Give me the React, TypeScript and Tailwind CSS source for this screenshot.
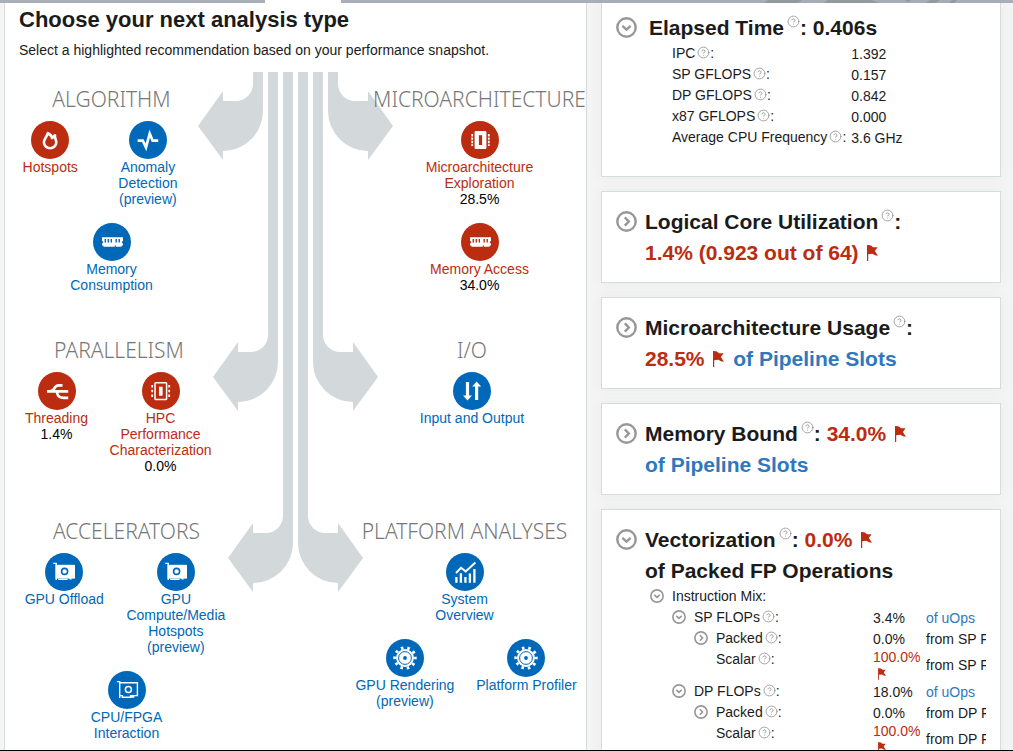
import React from "react";
import { CircleHelp } from "lucide-react";

type Tone = "red" | "blue";
type IconName =
  | "flame"
  | "pulse"
  | "memory"
  | "chip"
  | "chipOutline"
  | "threads"
  | "io"
  | "gpu"
  | "gpuOutline"
  | "chart"
  | "gear";

const CORE: Record<Tone, string> = { red: "#bb2c10", blue: "#0068b8" };

function Glyph({ name, core }: { name: IconName; core: string }) {
  switch (name) {
    case "flame":
      return (
        <path
          d="M16.8 12.2C16 15.8 12.9 17.6 12.9 21.6a6.2 5.6 0 0 0 12.4 0C25.3 18.8 23.6 17.6 24 14.2L21.2 17.2C20.6 14.6 19.2 13.2 16.8 12.2Z"
          fill="none"
          stroke="#fff"
          strokeWidth="2.6"
          strokeLinejoin="round"
        />
      );
    case "pulse":
      return (
        <path
          d="M8.6 19.6H13.8L17 26.4L20.7 12.6L23.6 19.6H29.2"
          fill="none"
          stroke="#fff"
          strokeWidth="2.6"
        />
      );
    case "memory":
      return (
        <>
          <path d="M9 14.3H30V18.2H29V20.2H30V22.5H28.6V23.8H22.8V22.5H21.8V23.8H10.4V22.5H9V20.2H10V18.2H9Z" fill="#fff" />
          <path d="M12.3 16V19.4M15.3 16V19.4M18.3 16V19.4M23.2 16V19.4M26.2 16V19.4" stroke={core} strokeWidth="1.4" />
        </>
      );
    case "chip":
      return (
        <>
          <rect x="13.6" y="10" width="11.8" height="18" rx="1.2" fill="#fff" />
          <rect x="17.9" y="14.2" width="3.2" height="9.8" fill={core} />
          <path d="M11.2 13V25M27.8 13V25" stroke="#fff" strokeWidth="1.8" strokeDasharray="2.4 1" />
        </>
      );
    case "chipOutline":
      return (
        <>
          <rect x="13" y="10.7" width="11.6" height="16.8" rx="0.8" fill="none" stroke="#fff" strokeWidth="1.5" />
          <rect x="17" y="14.7" width="3.6" height="9" fill="#fff" />
          <path d="M10.2 13V25M27.2 13V25" stroke="#fff" strokeWidth="1.8" strokeDasharray="2.6 2.1" />
        </>
      );
    case "threads":
      return (
        <path
          d="M9 19.4H30.2M24.5 13.3H20.5C15.5 13.3 17.5 19.4 12 19.4M30.2 25.8H25.5C20.5 25.8 19.6 23.6 18.8 19.4"
          fill="none"
          stroke="#fff"
          strokeWidth="2.7"
        />
      );
    case "io":
      return (
        <>
          <path d="M14.5 10V26M23.6 12V28" stroke="#fff" strokeWidth="3.2" />
          <path d="M10 23.4L14.5 28.4L19 23.4ZM19.2 14.6L23.6 9.6L28.2 14.6Z" fill="#fff" />
        </>
      );
    case "gpu":
      return (
        <>
          <path d="M8.3 10.4H11.2V27M13.2 26.4H22.6M24.4 25.8H26.6" fill="none" stroke="#fff" strokeWidth="1.4" />
          <rect x="10.6" y="11.8" width="19.4" height="13.8" fill="#fff" />
          <circle cx="19.6" cy="18.4" r="3" fill="#fff" stroke={core} strokeWidth="1.6" />
        </>
      );
    case "gpuOutline":
      return (
        <>
          <path
            d="M9 10.6H11.7V27M11.7 11.7H29.4V24.6H25.6V26H23.6V24.6M11.7 24.6H14.4V26.2H22.6V24.6H25"
            fill="none"
            stroke="#fff"
            strokeWidth="1.4"
          />
          <circle cx="20.4" cy="18.4" r="3" fill="none" stroke="#fff" strokeWidth="1.5" />
        </>
      );
    case "chart":
      return (
        <>
          <path
            d="M10.4 24V29.8M14.9 20.3V29.8M19.4 24V29.8M23.9 20.6V29.8M28.4 16V29.8"
            stroke="#fff"
            strokeWidth="2.3"
          />
          <path d="M10 20L15 14.8L19.7 18.4L29.4 9.4" fill="none" stroke="#fff" strokeWidth="2" />
        </>
      );
    case "gear":
      return (
        <>
          <circle cx="19" cy="19" r="10.2" fill="none" stroke="#fff" strokeWidth="3" strokeDasharray="2.6 3.81" transform="rotate(-7 19 19)" />
          <circle cx="19" cy="19" r="8.9" fill="#fff" />
          <circle cx="19" cy="19" r="6.4" fill="none" stroke={core} strokeWidth="1" />
          <circle cx="19" cy="19" r="1.9" fill={core} />
        </>
      );
  }
}

type Analysis = { label: string; tone: Tone; icon: IconName; value?: string };

function AnalysisLink({ item }: { item: Analysis }) {
  return (
    <a
      href="#"
      className={`flex max-w-[105px] flex-col items-center text-center text-sm leading-4 ${
        item.tone === "red" ? "text-[#bb2c10]" : "text-[#0068b8]"
      }`}
    >
      <svg viewBox="0 0 38 38" className="size-[38px]" aria-hidden="true">
        <circle cx="19" cy="19" r="19" fill={CORE[item.tone]} />
        <Glyph name={item.icon} core={CORE[item.tone]} />
      </svg>
      <span>{item.label}</span>
      {item.value && <span className="text-black">{item.value}</span>}
    </a>
  );
}

function Category({
  title,
  rows,
  around = false,
}: {
  title: string;
  rows: Analysis[][];
  around?: boolean;
}) {
  return (
    <section className="flex min-w-0 flex-col items-center">
      <h2 className="mb-2 font-['Noto_Sans',sans-serif] text-[21px] leading-7 font-light whitespace-nowrap text-[#777]">
        {title}
      </h2>
      <div className="flex w-full flex-col gap-4">
        {rows.map((row, i) => (
          <div key={i} className={`flex ${around ? "justify-around" : "justify-evenly"}`}>
            {row.map((item) => (
              <AnalysisLink key={item.label} item={item} />
            ))}
          </div>
        ))}
      </div>
    </section>
  );
}

// One left-pointing arrow; each step moves it inward by a stripe, drop lengthens its stem.
function arrowPath(step: number, drop: number) {
  const x = step * 15;
  return `M${55 + x} 0V${12 + drop}A17 17 0 0 1 ${38 + x} ${29 + drop}H${25 + x}V${19 + drop}L${x} ${
    54 + drop
  }L${25 + x} ${88 + drop}V${79 + drop}A40 40 0 0 0 ${65 + x} ${39 + drop}V0Z`;
}

function FlowArrows() {
  const half = (
    <>
      <path d={arrowPath(0, 0)} />
      <path d={arrowPath(1, 251)} />
      <path d={arrowPath(2, 432)} />
    </>
  );
  return (
    <svg viewBox="0 0 195 520" className="col-start-1 row-start-1 h-[520px] w-[195px] justify-self-center" fill="#d3d8db" aria-hidden="true">
      {half}
      <g transform="translate(195 0) scale(-1 1)">{half}</g>
    </svg>
  );
}

function Toggle({ open, small = false, label }: { open: boolean; small?: boolean; label: string }) {
  return (
    <button type="button" aria-label={label} aria-expanded={open} className={`shrink-0 ${small ? "size-3.5" : "size-[21px]"}`}>
      <svg viewBox="0 0 21 21" className="size-full" fill="none" stroke="#979797" strokeWidth="2.4" aria-hidden="true">
        <circle cx="10.5" cy="10.5" r="9.2" />
        <path d={open ? "M6.4 8.8L10.5 12.6L14.6 8.8" : "M8.8 6.4L12.8 10.5L8.8 14.6"} />
      </svg>
    </button>
  );
}

function Help({ big = false }: { big?: boolean }) {
  return (
    <CircleHelp
      className={`inline shrink-0 align-baseline text-[#949494] ${big ? "mb-[7px] ml-[3px] size-[13px]" : "mb-0.5 ml-0.5 size-[13px]"}`}
      strokeWidth={1.6}
      aria-label="Help"
    />
  );
}

function Flag({ small = false }: { small?: boolean }) {
  return (
    <svg viewBox="0 0 11 16" className={`inline ${small ? "h-3 w-2" : "ml-[3px] h-4 w-[11px] align-[-1px]"}`} fill="#bb2c10" role="img" aria-label="Flagged">
      <path d="M0 0H1.2V16H0Z" />
      <path d="M1 0L4 0.6L6 2.2L10.6 2.2L7.8 6L11 10.8L8 10.2L5.4 8.8L1 9.2Z" />
    </svg>
  );
}

const HEAD = "text-[21px] leading-[31px] font-bold text-[#1b1b1b]";

function Card({ open = false, name, children, body, wide = false, first = false }: {
  open?: boolean;
  name: string;
  children: React.ReactNode;
  body?: React.ReactNode;
  wide?: boolean;
  first?: boolean;
}) {
  return (
    <section
      className={`border border-[#d6dbde] bg-white px-3.5 shadow-[0_0_12px_rgba(60,80,80,0.05)] ${
        first ? "border-t-0 pt-[9px] pb-7" : "py-3.5"
      }`}
    >
      <div className={`flex ${wide ? "gap-3" : "gap-2"}`}>
        <span className="flex h-[31px] items-center">
          <Toggle open={open} label={name} />
        </span>
        <h2 className={HEAD}>{children}</h2>
      </div>
      {body}
    </section>
  );
}

type Metric = {
  label: string;
  depth: number;
  toggle?: "open" | "closed";
  help?: boolean;
  value?: string;
  flagged?: boolean;
  note?: string;
  noteLink?: boolean;
};

const INDENT = ["pl-0", "pl-[22px]", "pl-[44px]"];

function MetricTable({ rows, fixed = false }: { rows: Metric[]; fixed?: boolean }) {
  return (
    <div className="overflow-hidden pl-[34px]">
      <table className={`text-sm leading-4 text-[#1b1b1b] ${fixed ? "w-[430px] table-fixed" : ""}`}>
        {fixed && (
          <colgroup>
            <col className="w-[223px]" />
            <col className="w-[53px]" />
            <col />
          </colgroup>
        )}
        <tbody>
          {rows.map((row, i) => (
            <tr key={i} className="align-middle">
              <th scope="row" className="p-0 text-left align-top font-normal">
                <span className={`flex h-[21px] items-center pb-px whitespace-nowrap ${INDENT[row.depth]}`}>
                  <span className="flex w-[22px] shrink-0">
                    {row.toggle && <Toggle small open={row.toggle === "open"} label={row.label} />}
                  </span>
                  {row.label}
                  {row.help && <Help />}:
                </span>
              </th>
              <td className={fixed ? "p-0 pr-1" : "p-0 pt-px pl-[5px]"}>
                {row.flagged ? (
                  <span className="text-[#bb2c10]">
                    {row.value} <span className="block h-4 pl-[5px]"><Flag small /></span>
                  </span>
                ) : (
                  row.value
                )}
              </td>
              {fixed && (
                <td className="p-0 whitespace-nowrap">
                  {row.noteLink ? (
                    <a href="#" className="text-[#2f78bd]">{row.note}</a>
                  ) : (
                    row.note
                  )}
                </td>
              )}
            </tr>
          ))}
        </tbody>
      </table>
    </div>
  );
}

const elapsed: Metric[] = [
  { label: "IPC", depth: 0, help: true, value: "1.392" },
  { label: "SP GFLOPS", depth: 0, help: true, value: "0.157" },
  { label: "DP GFLOPS", depth: 0, help: true, value: "0.842" },
  { label: "x87 GFLOPS", depth: 0, help: true, value: "0.000" },
  { label: "Average CPU Frequency", depth: 0, help: true, value: "3.6 GHz" },
];

const mix: Metric[] = [
  { label: "Instruction Mix", depth: 0, toggle: "open" },
  { label: "SP FLOPs", depth: 1, toggle: "open", help: true, value: "3.4%", note: "of uOps", noteLink: true },
  { label: "Packed", depth: 2, toggle: "closed", help: true, value: "0.0%", note: "from SP FP" },
  { label: "Scalar", depth: 2, help: true, value: "100.0%", flagged: true, note: "from SP FP" },
  { label: "DP FLOPs", depth: 1, toggle: "open", help: true, value: "18.0%", note: "of uOps", noteLink: true },
  { label: "Packed", depth: 2, toggle: "closed", help: true, value: "0.0%", note: "from DP FP" },
  { label: "Scalar", depth: 2, help: true, value: "100.0%", flagged: true, note: "from DP FP" },
];

export default function App() {
  return (
    <div className="flex h-screen flex-col overflow-hidden bg-[#f4f4f4] font-['Liberation_Sans',Arial,sans-serif] text-[#1b1b1b]">
      <div className="flex h-[3px] shrink-0 bg-[#a9afb9]">
        <div className="w-[265px]" />
        <div className="w-[76px] bg-white" />
        <svg viewBox="0 0 672 3" className="h-[3px] w-[672px]" fill="#969c9f" aria-hidden="true">
          <path d="M423 3L427 0H461L457 3ZM483 3L487 0H531L538 3ZM563 0H571L567 2ZM585 3L589 0H599L595 3ZM608 3L611 0H616L613 3Z" />
        </svg>
      </div>

      <main className="flex min-h-0 flex-1 items-stretch pl-1">
        <section className="min-w-0 flex-1 border-x border-[#d6dbde] bg-white">
          <header className="px-3.5 pt-1">
            <h1 className="text-[22px] leading-[26px] font-bold">Choose your next analysis type</h1>
            <p className="mt-[7px] text-sm leading-5">
              Select a highlighted recommendation based on your performance snapshot.
            </p>
          </header>
          <div className="mt-3 grid">
            <FlowArrows />
            <div className="col-start-1 row-start-1 flex flex-col gap-[43px] pt-[13px]">
              <div className="grid grid-cols-[minmax(0,1fr)_155px_minmax(0,1fr)]">
                <Category
                  title="ALGORITHM"
                  rows={[
                    [
                      { label: "Hotspots", tone: "red", icon: "flame" },
                      { label: "Anomaly Detection (preview)", tone: "blue", icon: "pulse" },
                    ],
                    [{ label: "Memory Consumption", tone: "blue", icon: "memory" }],
                  ]}
                />
                <div />
                <Category
                  title="MICROARCHITECTURE"
                  rows={[
                    [{ label: "Microarchitecture Exploration", tone: "red", icon: "chip", value: "28.5%" }],
                    [{ label: "Memory Access", tone: "red", icon: "memory", value: "34.0%" }],
                  ]}
                />
              </div>
              <div className="grid grid-cols-[minmax(0,1fr)_125px_minmax(0,1fr)]">
                <Category
                  title="PARALLELISM"
                  rows={[
                    [
                      { label: "Threading", tone: "red", icon: "threads", value: "1.4%" },
                      { label: "HPC Performance Characterization", tone: "red", icon: "chipOutline", value: "0.0%" },
                    ],
                  ]}
                />
                <div />
                <Category title="I/O" rows={[[{ label: "Input and Output", tone: "blue", icon: "io" }]]} />
              </div>
              <div className="grid grid-cols-[minmax(0,1fr)_95px_minmax(0,1fr)]">
                <Category
                  title="ACCELERATORS"
                  rows={[
                    [
                      { label: "GPU Offload", tone: "blue", icon: "gpu" },
                      { label: "GPU Compute/Media Hotspots (preview)", tone: "blue", icon: "gpu" },
                    ],
                    [{ label: "CPU/FPGA Interaction", tone: "blue", icon: "gpuOutline" }],
                  ]}
                />
                <div />
                <Category
                  title="PLATFORM ANALYSES"
                  around
                  rows={[
                    [{ label: "System Overview", tone: "blue", icon: "chart" }],
                    [
                      { label: "GPU Rendering (preview)", tone: "blue", icon: "gear" },
                      { label: "Platform Profiler", tone: "blue", icon: "gear" },
                    ],
                  ]}
                />
              </div>
            </div>
          </div>
        </section>

        <aside className="flex w-[426px] shrink-0 flex-col gap-3.5 pr-3 pl-3.5">
          <Card open wide first name="Elapsed Time" body={<MetricTable rows={elapsed} />}>
            Elapsed Time
            <Help big />: 0.406s
          </Card>
          <Card name="Logical Core Utilization">
            Logical Core Utilization
            <Help big />:
            <span className="block text-[#bb2c10]">
              1.4% (0.923 out of 64) <Flag />
            </span>
          </Card>
          <Card name="Microarchitecture Usage">
            Microarchitecture Usage
            <Help big />:
            <span className="block">
              <span className="text-[#bb2c10]">28.5%</span> <Flag />{" "}
              <a href="#" className="ml-[3px] text-[#2f78bd]">of Pipeline Slots</a>
            </span>
          </Card>
          <Card name="Memory Bound">
            Memory Bound
            <Help big />: <span className="text-[#bb2c10]">34.0%</span> <Flag />
            <a href="#" className="block text-[#2f78bd]">of Pipeline Slots</a>
          </Card>
          <Card open name="Vectorization" body={<MetricTable fixed rows={mix} />}>
            Vectorization
            <Help big />: <span className="text-[#bb2c10]">0.0%</span> <Flag />
            <span className="block">of Packed FP Operations</span>
          </Card>
        </aside>
      </main>
      <div className="h-px shrink-0 bg-black" />
    </div>
  );
}
